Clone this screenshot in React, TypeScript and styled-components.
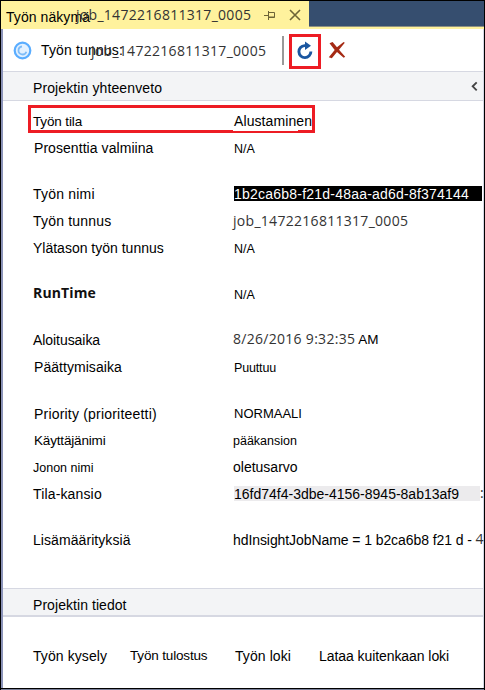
import React from 'react';
import styled, { createGlobalStyle } from 'styled-components';

const SANS = '"Liberation Sans", Arial, sans-serif';
const UI = '"Open Sans", "Segoe UI", sans-serif';

const GlobalStyle = createGlobalStyle`
  * { box-sizing: border-box; }
  body { margin: 0; background: #fff; }
`;

const Window = styled.div`
  width: 485px;
  height: 690px;
  display: flex;
  flex-direction: column;
  overflow: hidden;
  border: 1px solid #000;
  border-bottom: 0;
  background: #fff;
  color: #000;
  font: 14px ${SANS};
  white-space: pre;
`;

const TabBar = styled.header`
  flex: none;
  height: 28px;
  display: flex;
  background: #fff29d;
`;

const Tab = styled.div`
  width: 308px;
  display: flex;
  align-items: center;
  padding-left: 5px;
  color: #6d6437;
`;

const TabWell = styled.div`
  flex: 1;
  height: 26px;
  background: #364e6f;
  border-bottom: 1px solid #8d9082;
`;

const Body = styled.main`
  flex: 1;
  min-height: 0;
  display: flex;
  flex-direction: column;
  border-left: 2px solid #8b93b8;
  border-right: 1px solid #d3d6e4;
`;

const Toolbar = styled.div`
  flex: none;
  height: 42px;
  display: flex;
  align-items: center;
  padding-left: 10px;
`;

const Label = styled.span<{ $size?: number; $track?: number; $x?: number; $y?: number }>`
  font-size: ${p => p.$size ?? 14}px;
  letter-spacing: ${p => p.$track ?? 0}px;
  padding-left: ${p => p.$x ?? 0}px;
  transform: translateY(${p => p.$y ?? (p.$size ? 0 : -1)}px);
`;

const Caption = styled(Label)<{ $width: number }>`
  flex: none;
  width: ${p => p.$width}px;
  color: #000;
`;

const JobId = styled.span<{ $y?: number }>`
  flex: none;
  font: 14px/20px ${UI};
  letter-spacing: 0.29px;
  color: #333;
  transform: translateY(${p => p.$y ?? 0}px);
`;

const PinIcon = styled.svg`
  flex: none;
  margin-left: 13px;
`;

const CloseIcon = styled.svg`
  flex: none;
  margin-left: 13px;
`;

const StatusIcon = styled.svg`
  flex: none;
  margin-right: 8px;
`;

const Divider = styled.div`
  width: 2px;
  height: 29px;
  margin: 0 5px 0 16px;
  background: #999;
`;

const RefreshButton = styled.button`
  flex: none;
  width: 32px;
  height: 35px;
  margin: 2px 7px 0 0;
  padding: 0;
  display: flex;
  align-items: center;
  justify-content: center;
  border: 3px solid #ed1c24;
  background: #fff;
`;

const SectionHeader = styled.h2`
  flex: none;
  height: 30px;
  margin: 0;
  padding: 5px 5px 0 30px;
  display: flex;
  align-items: center;
  justify-content: space-between;
  border-top: 1px solid #d6d8e2;
  border-bottom: 1px solid #d6d8e2;
  background: #f3f4f6;
  font: 14px ${SANS};
`;

const DetailsHeader = styled(SectionHeader)`
  height: 29px;
  border-bottom-width: 2px;
`;

const Chevron = styled.svg`
  transform: translateY(-2px);
`;

const Summary = styled.section`
  flex: none;
  height: 487px;
  padding-top: 7px;
  display: flex;
  flex-direction: column;
  gap: 19px;
`;

const Group = styled.div`
  display: flex;
  flex-direction: column;
`;

const Row = styled.div`
  position: relative;
  height: 27px;
  display: grid;
  grid-template-columns: 200px 1fr;
  align-items: center;
  padding-left: 30px;
`;

const Highlight = styled.div`
  position: absolute;
  left: 25px;
  top: -3px;
  width: 287px;
  height: 28px;
  border: 3px solid #ed1c24;
`;

const State = styled.span`
  position: relative;
  justify-self: start;
  width: 65px;
  padding: 0 0 1px 1px;
  background: #fff;
  line-height: 17px;
  letter-spacing: 0.09px;
`;

const Heading = styled.strong`
  font: bold 14px ${UI};
  letter-spacing: 0.14px;
  color: #111;
  transform: translateY(-2px);
`;

const Value = styled.div`
  display: flex;
  align-items: center;
  min-width: 0;
`;

const Field = styled.span<{ $selected?: boolean; $width: number; $track: number }>`
  flex: none;
  width: ${p => p.$width}px;
  height: 15px;
  margin-left: 1px;
  line-height: 16px;
  letter-spacing: ${p => p.$track}px;
  color: ${p => (p.$selected ? '#fff' : '#000')};
  background: ${p => (p.$selected ? '#000' : '#ecebed')};
  transform: translateY(-1px);
`;

const Trailing = styled.span<{ $y: number }>`
  font: 14px/20px ${UI};
  color: #333;
  transform: translateY(${p => p.$y}px);
`;

const Links = styled.nav`
  display: flex;
  align-items: center;
  height: 79px;
  padding: 8px 0 0 30px;
`;

const Link = styled(Label)<{ $width: number }>`
  flex: none;
  width: ${p => p.$width}px;
`;

const BottomEdge = styled.footer`
  flex: none;
  height: 2px;
  background: #777d96;
  border-top: 1px solid #000;
`;

export default function App() {
  return (
    <>
      <GlobalStyle />
      <Window>
        <TabBar>
          <Tab>
            <Caption $width={70} $track={0.07} $y={2}>Työn näkymä</Caption>
            <JobId>job_1472216811317_0005</JobId>
            <PinIcon width="12" height="12" viewBox="0 0 12 12" fill="none" stroke="currentColor">
              <path d="M0 6.5h4M4.5 2v9M4.5 3.5h6v5h-6M4.5 8h6" />
            </PinIcon>
            <CloseIcon width="12" height="12" viewBox="0 0 12 12" fill="none" stroke="currentColor" strokeWidth="1.6">
              <path d="M1 1l10 10M11 1L1 11" />
            </CloseIcon>
          </Tab>
          <TabWell />
        </TabBar>
        <Body>
          <Toolbar>
            <StatusIcon width="20" height="20" viewBox="0 0 20 20" fill="none">
              <circle cx="9.5" cy="10.5" r="7.8" fill="#e3f1ff" stroke="#5aadff" strokeWidth="2.2" />
              <path d="M9 6.5a4 4 0 1 0 4.3 5.2" stroke="#7dbcf8" strokeWidth="1.8" />
            </StatusIcon>
            <Caption $width={50} $track={0.15} $y={0}>Työn tunnus:</Caption>
            <JobId $y={1}>job_1472216811317_0005</JobId>
            <Divider />
            <RefreshButton aria-label="Refresh">
              <svg width="18" height="20" viewBox="0 0 18 20" fill="none">
                <path d="M10 4.6H8.6a6 6 0 1 0 6.3 6" stroke="#1a56a0" strokeWidth="2.9" />
                <path d="M9 .5l6 4.2L9 9z" fill="#1a56a0" />
              </svg>
            </RefreshButton>
            <svg width="18" height="18" viewBox="0 0 18 18">
              <path d="M1.5 2.2L4.6 1 9 6.2 15.6 1l1.2.8L11 8.7l6.2 7-1.5 1L9 11l-5.2 6.2-3-.9L6.7 9z" fill="#a52a14" />
            </svg>
          </Toolbar>
          <SectionHeader>
            <Label $track={0.11}>Projektin yhteenveto</Label>
            <Chevron width="7" height="11" viewBox="0 0 7 11" fill="none" stroke="#444" strokeWidth="1.9">
              <path d="M5.7 1.3L1.7 5.3l4 4" />
            </Chevron>
          </SectionHeader>
          <Summary>
            <Group>
              <Row>
                <Label $size={13.5} $track={-0.13}>Työn tila</Label>
                <Highlight />
                <State>Alustaminen</State>
              </Row>
              <Row>
                <Label $x={1} $track={0.06}>Prosenttia valmiina</Label>
                <Label $size={12.5} $x={1}>N/A</Label>
              </Row>
            </Group>
            <Group>
              <Row>
                <Label $track={0.2}>Työn nimi</Label>
                <Value><Field $selected $width={248} $track={0.22}>1b2ca6b8-f21d-48aa-ad6d-8f374144</Field></Value>
              </Row>
              <Row>
                <Label $track={0.2}>Työn tunnus</Label>
                <JobId $y={-1}>job_1472216811317_0005</JobId>
              </Row>
              <Row>
                <Label>Ylätason työn tunnus</Label>
                <Label $size={12.5} $x={1}>N/A</Label>
              </Row>
            </Group>
            <Group>
              <Row>
                <Heading>RunTime</Heading>
                <Label $size={12.5} $x={1}>N/A</Label>
              </Row>
            </Group>
            <Group>
              <Row>
                <Label $track={-0.06}>Aloitusaika</Label>
                <Value>
                  <JobId $y={-2}>8/26/2016 9:32:35</JobId>
                  <Label $size={13.5} $x={3} $y={-1}>AM</Label>
                </Value>
              </Row>
              <Row>
                <Label $x={1} $track={0.05}>Päättymisaika</Label>
                <Label $size={12.5} $x={1} $track={-0.16}>Puuttuu</Label>
              </Row>
            </Group>
            <Group>
              <Row>
                <Label $x={1} $y={0} $track={0.2}>Priority (prioriteetti)</Label>
                <Label $size={13} $x={1}>NORMAALI</Label>
              </Row>
              <Row>
                <Label $size={13.5} $x={1} $track={-0.17}>Käyttäjänimi</Label>
                <Label $size={12.5}>pääkansion</Label>
              </Row>
              <Row>
                <Label $size={12.5}>Jonon nimi</Label>
                <Label>oletusarvo</Label>
              </Row>
              <Row>
                <Label $track={0.15}>Tila-kansio</Label>
                <Value>
                  <Field $width={246} $track={0}>16fd74f4-3dbe-4156-8945-8ab13af9</Field>
                  <Trailing $y={-2}>:</Trailing>
                </Value>
              </Row>
            </Group>
            <Group>
              <Row>
                <Label $track={0.07}>Lisämäärityksiä</Label>
                <Value>
                  <Label $track={-0.08}>hdInsightJobName = 1 b2ca6b8 f21 d - </Label>
                  <Trailing $y={-2}>4</Trailing>
                </Value>
              </Row>
            </Group>
          </Summary>
          <DetailsHeader>
            <Label $y={0} $track={0.06}>Projektin tiedot</Label>
          </DetailsHeader>
          <Links>
            <Link $width={97} $track={0.08}>Työn kysely</Link>
            <Link $width={105} $size={13.5} $track={-0.16} $y={-1}>Työn tulostus</Link>
            <Link $width={84} $track={0.08}>Työn loki</Link>
            <Link $width={140} $track={-0.07}>Lataa kuitenkaan loki</Link>
          </Links>
        </Body>
        <BottomEdge />
      </Window>
    </>
  );
}
